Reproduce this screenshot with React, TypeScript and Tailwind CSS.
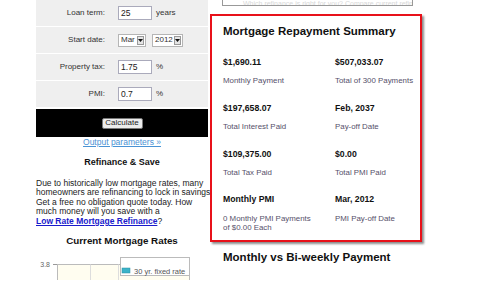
const rows = [
  { label: "Loan term:", value: "25", unit: "years" },
  { label: "Start date:", value: "", unit: "" },
  { label: "Property tax:", value: "1.75", unit: "%" },
  { label: "PMI:", value: "0.7", unit: "%" },
];

const summary = [
  { value: "$1,690.11", label: "Monthly Payment" },
  { value: "$507,033.07", label: "Total of 300 Payments" },
  { value: "$197,658.07", label: "Total Interest Paid" },
  { value: "Feb, 2037", label: "Pay-off Date" },
  { value: "$109,375.00", label: "Total Tax Paid" },
  { value: "$0.00", label: "Total PMI Paid" },
  { value: "Monthly PMI", label: "0 Monthly PMI Payments\nof $0.00 Each" },
  { value: "Mar, 2012", label: "PMI Pay-off Date" },
];

const Select = ({ value, width }: { value: string; width: string }) => (
  <div className={`flex h-[13px] items-center border border-[#b5b5b5] bg-white ${width}`}>
    <span className="flex-1 pl-[2px] text-[8px] leading-none text-[#333]">{value}</span>
    <span className="mr-[1px] flex h-[9px] w-[7px] items-center justify-center border border-[#999] bg-[#e4e4e4]">
      <svg width="5" height="3" viewBox="0 0 5 3">
        <path d="M0 0h5L2.5 3z" fill="#111" />
      </svg>
    </span>
  </div>
);

const RatesChart = () => (
  <svg width="174" height="33" viewBox="0 0 174 33" className="block">
    <text x="14" y="19.5" textAnchor="end" fontSize="7" fill="#666" fontFamily="Liberation Sans, Arial, sans-serif">
      3.8
    </text>
    <line x1="17" y1="17.5" x2="21" y2="17.5" stroke="#999" />
    <rect x="21.5" y="17.5" width="132" height="20" fill="#fffdf0" stroke="#bbb" />
    <line x1="54.5" y1="17.5" x2="54.5" y2="33" stroke="#ddd" />
    <line x1="82.5" y1="17.5" x2="82.5" y2="33" stroke="#ddd" />
    <rect x="84.5" y="10.5" width="69" height="18" fill="#fff" stroke="#bbb" />
    <rect x="86" y="21" width="8" height="5" fill="#3bb3c9" stroke="#2a8fa3" strokeWidth="0.5" />
    <text x="98" y="26.5" fontSize="7.5" fill="#555" fontFamily="Liberation Sans, Arial, sans-serif">
      30 yr. fixed rate
    </text>
  </svg>
);

export default function App() {
  return (
    <div className="h-[281px] w-[500px] overflow-hidden bg-white font-['Liberation_Sans',Arial,sans-serif]">
      <div className="ml-[36px] flex gap-[2px]">
        {/* left column */}
        <div className="flex w-[172px] flex-col">
          <div className="bg-[#efefef]">
            {rows.map((r) => (
              <div key={r.label} className="flex h-[27px] items-center border-b border-white">
                <div className="w-[69px] text-right text-[8px] text-[#333]">{r.label}</div>
                <div className="ml-[13px] flex items-center">
                  {r.label === "Start date:" ? (
                    <div className="flex items-center gap-[6px]">
                      <Select value="Mar" width="w-[28px]" />
                      <Select value="2012" width="w-[31px]" />
                    </div>
                  ) : (
                    <>
                      <div className="flex h-[14px] w-[34px] items-center border border-[#aab] bg-white pl-[2px] text-[8.5px] text-[#222]">
                        {r.value}
                      </div>
                      <span className="ml-[4px] text-[8px] text-[#333]">{r.unit}</span>
                    </>
                  )}
                </div>
              </div>
            ))}
          </div>
          <div className="mt-[1px] flex h-[28px] items-center justify-center bg-black">
            <button className="h-[11px] w-[41px] rounded-[2px] border border-[#777] bg-[#ececec] text-[8px] leading-none text-[#222]">
              Calculate
            </button>
          </div>
          <a className="text-center text-[8.5px] leading-[10px] text-[#4a92d4] underline">Output parameters »</a>
          <h3 className="mt-[10px] text-center text-[9px] font-bold leading-[11px] text-[#111]">Refinance &amp; Save</h3>
          <p className="mt-[10.5px] w-[174px] whitespace-nowrap text-[8.5px] leading-[9.6px] text-[#222]">
            Due to historically low mortgage rates, many
            <br />
            homeowners are refinancing to lock in savings
            <br />
            Get a free no obligation quote today. How
            <br />
            much money will you save with a
            <br />
            <a className="font-bold text-[#1a1acc] underline">Low Rate Mortgage Refinance</a>?
          </p>
          <h3 className="mt-[9px] text-center text-[9.8px] font-bold leading-[12px] text-[#111]">Current Mortgage Rates</h3>
          <RatesChart />
        </div>

        {/* right column */}
        <div className="flex flex-col">
          <div className="ml-[12px] flex h-[6px] w-[191px] items-end overflow-hidden border-x border-b border-[#999] px-[20px]">
            <span className="whitespace-nowrap text-[7px] leading-[3px] text-[#d8d8d8]">Which refinance is right for you? Compare current refinance rates.</span>
          </div>
          <div className="mt-[8px] w-[212px] border-2 border-[#e8111a] bg-white pb-[7.5px] pl-[11px] pt-[8px] shadow-[2px_2px_2px_rgba(0,0,0,0.45)]">
            <h2 className="text-[11.5px] font-bold leading-[14px] text-[#111]">Mortgage Repayment Summary</h2>
            <div className="mt-[18px] grid grid-cols-[112px_1fr] gap-y-[16.3px]">
              {summary.map((s) => (
                <div key={s.value}>
                  <div className="text-[8.7px] font-bold leading-[12px] text-[#111]">{s.value}</div>
                  <div className="mt-[8.2px] whitespace-pre-line text-[7.9px] leading-[9.3px] text-[#56506a]">{s.label}</div>
                </div>
              ))}
            </div>
          </div>
          <h2 className="ml-[13px] mt-[8px] text-[11.5px] font-bold leading-[14px] text-[#111]">Monthly vs Bi-weekly Payment</h2>
        </div>
      </div>
    </div>
  );
}
